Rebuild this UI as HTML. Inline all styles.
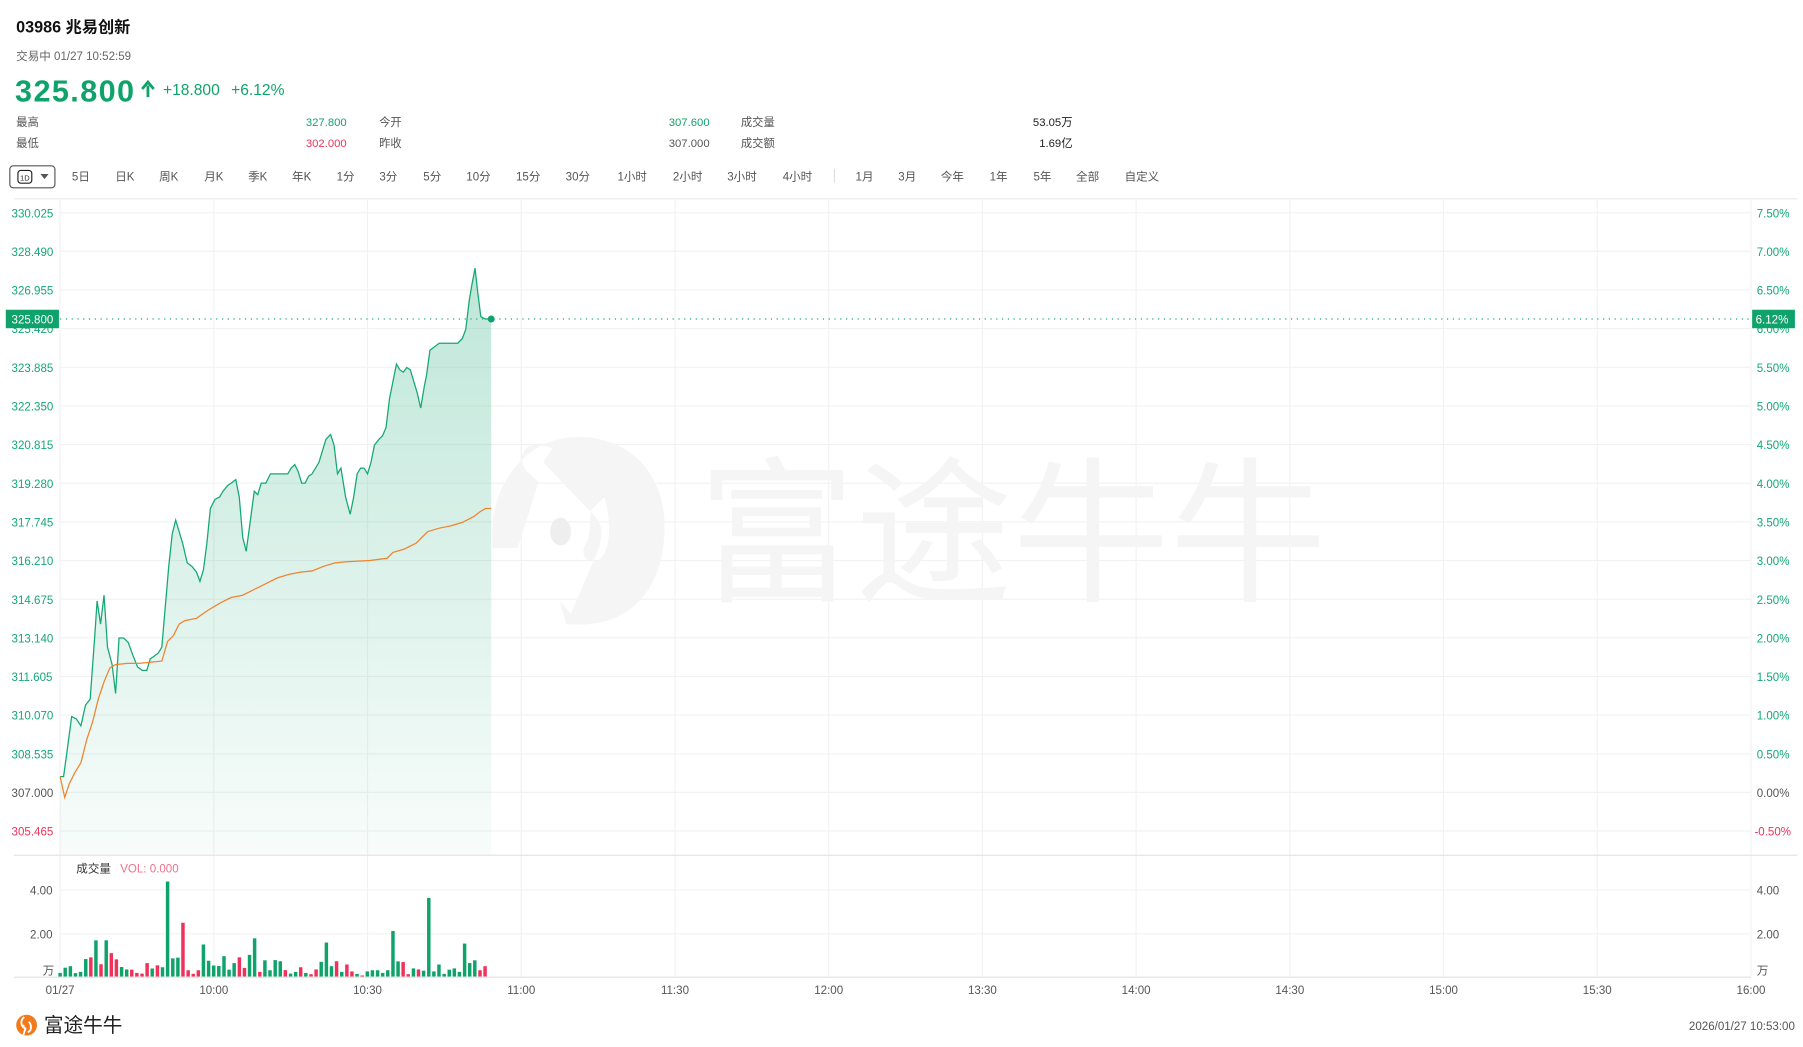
<!DOCTYPE html>
<html><head><meta charset="utf-8"><style>
html,body{margin:0;padding:0;background:#fff;width:1803px;height:1047px;overflow:hidden}
svg{display:block}
text{font-family:"Liberation Sans","Noto Sans CJK SC",sans-serif}
</style></head><body>
<svg width="1803" height="1047" viewBox="0 0 1560 905.9" xmlns="http://www.w3.org/2000/svg">
<defs>
<linearGradient id="ag" x1="0" y1="0" x2="0" y2="1">
<stop offset="0" stop-color="#18a874" stop-opacity="0.28"/>
<stop offset="1" stop-color="#18a874" stop-opacity="0.03"/>
</linearGradient>
</defs>
<text x="14" y="28" font-size="14" font-weight="bold" fill="#111">03986  兆易创新</text>
<text x="14" y="52" font-size="10" fill="#666">交易中 01/27 10:52:59</text>
<text x="13" y="88" font-size="26.5" font-weight="bold" fill="#0fa36b" textLength="103">325.800</text>
<path d="M128 84 V74 M123 77 L128 71 L133 77" stroke="#0fa36b" stroke-width="2.4" fill="none"/>
<text x="141" y="82" font-size="13.5" fill="#0fa36b">+18.800</text>
<text x="200" y="82" font-size="13.5" fill="#0fa36b">+6.12%</text>
<g font-size="9.8" fill="#555">
<text x="14" y="109">最高</text><text x="14" y="127">最低</text>
<text x="328" y="109">今开</text><text x="328" y="127">昨收</text>
<text x="641" y="109">成交量</text><text x="641" y="127">成交额</text>
</g>
<g font-size="9.8" text-anchor="end">
<text x="300" y="109" fill="#0fa36b">327.800</text>
<text x="300" y="127" fill="#f0325a">302.000</text>
<text x="614" y="109" fill="#0fa36b">307.600</text>
<text x="614" y="127" fill="#555">307.000</text>
<text x="928" y="109" fill="#222">53.05万</text>
<text x="928" y="127" fill="#222">1.69亿</text>
</g>
<rect x="8.5" y="143.5" width="39" height="19" rx="3" fill="#fff" stroke="#555"/>
<rect x="15.5" y="147.5" width="12" height="11" rx="2.5" fill="none" stroke="#222"/>
<text x="21.5" y="156" font-size="6.5" text-anchor="middle" fill="#222">1D</text>
<path d="M35 150.5 L42 150.5 L38.5 155 Z" fill="#555"/>
<g font-size="10" fill="#555" text-anchor="middle">
<text x="70" y="156">5日</text><text x="108" y="156">日K</text><text x="146" y="156">周K</text><text x="185" y="156">月K</text><text x="223" y="156">季K</text><text x="261" y="156">年K</text><text x="299" y="156">1分</text><text x="336" y="156">3分</text><text x="374" y="156">5分</text><text x="414" y="156">10分</text><text x="457" y="156">15分</text><text x="500" y="156">30分</text><text x="547" y="156">1小时</text><text x="595" y="156">2小时</text><text x="642" y="156">3小时</text><text x="690" y="156">4小时</text><text x="748" y="156">1月</text><text x="785" y="156">3月</text><text x="824" y="156">今年</text><text x="864" y="156">1年</text><text x="902" y="156">5年</text><text x="941" y="156">全部</text><text x="988" y="156">自定义</text>
</g>
<line x1="722" y1="146" x2="722" y2="158" stroke="#ddd"/>
<line x1="12" y1="172" x2="1555" y2="172" stroke="#e8e8e8"/>
<g stroke="#f2f2f2" stroke-width="1">
<path d="M52 184H1515M52 217.4H1515M52 250.9H1515M52 284.3H1515M52 317.8H1515M52 351.2H1515M52 384.6H1515M52 418.1H1515M52 451.5H1515M52 485H1515M52 518.4H1515M52 551.8H1515M52 585.3H1515M52 618.7H1515M52 652.2H1515M52 685.6H1515M52 719H1515"/>
<path d="M52 172V845M185 172V845M318 172V845M451 172V845M584 172V845M717 172V845M850 172V845M983 172V845M1116 172V845M1249 172V845M1382 172V845M1515 172V845"/>
<path d="M52 770H1515M52 808H1515"/>
</g>
<g fill="#f5f5f5">
<path d="M500 378 C455 378 426 420 426 458 L426 474 L448 474 L466 417 L456 408 C447 398 451 377 478 388 L470 400 L515 447 C522 455 521 465 518 475 L494 531 L484 520 L490 540 C545 545 575 510 575 455 C575 410 545 378 500 378 Z M523 430 C530 455 528 484 514 486 C506 486 502 478 507 470 C512 460 510 450 511 442 Z"/>
<ellipse cx="485" cy="460" rx="9" ry="12" fill="#eeeeee"/>
<text x="604" y="510" font-size="136" fill="#f5f5f5">富途牛牛</text>
</g>
<path fill="url(#ag)" d="M52 672 L55 672 58 650 62 620 66 622 70 628 74 610 78 605 82 550 84 520 87 540 90 515 93 560 97 575 100 600 103 552 107 552 111 556 115 567 119 577 123 580 127 580 130 570 133 568 137 565 140 560 143 525 146 490 149 462 152 450 155 460 158 470 162 487 166 490 170 495 173 503 176 493 179 470 182 440 186 432 190 430 193 425 197 420 200 418 204 415 207 430 210 465 213 477 216 455 220 425 223 428 226 418 230 418 234 410 237 410 241 410 245 410 249 410 252 405 255 402 258 408 261 418 264 418 267 412 270 410 273 405 276 400 279 390 282 380 286 376 289 385 292 410 295 405 299 430 303 445 306 430 309 410 312 405 315 405 318 410 321 400 324 385 328 380 331 377 334 370 337 345 340 330 343 315 346 320 349 322 352 318 355 320 358 330 361 340 364 353 367 335 369 325 372 303 376 300 380 297 384 297 388 297 392 297 396 297 400 293 403 285 406 260 408 248 411 232 413 250 416 274 420 276 425 276 L425 740 L52 740 Z"/>
<polyline fill="none" stroke="#14a874" stroke-width="1.1" points="52,672 55,672 58,650 62,620 66,622 70,628 74,610 78,605 82,550 84,520 87,540 90,515 93,560 97,575 100,600 103,552 107,552 111,556 115,567 119,577 123,580 127,580 130,570 133,568 137,565 140,560 143,525 146,490 149,462 152,450 155,460 158,470 162,487 166,490 170,495 173,503 176,493 179,470 182,440 186,432 190,430 193,425 197,420 200,418 204,415 207,430 210,465 213,477 216,455 220,425 223,428 226,418 230,418 234,410 237,410 241,410 245,410 249,410 252,405 255,402 258,408 261,418 264,418 267,412 270,410 273,405 276,400 279,390 282,380 286,376 289,385 292,410 295,405 299,430 303,445 306,430 309,410 312,405 315,405 318,410 321,400 324,385 328,380 331,377 334,370 337,345 340,330 343,315 346,320 349,322 352,318 355,320 358,330 361,340 364,353 367,335 369,325 372,303 376,300 380,297 384,297 388,297 392,297 396,297 400,293 403,285 406,260 408,248 411,232 413,250 416,274 420,276 425,276"/>
<polyline fill="none" stroke="#f08430" stroke-width="1.1" points="52,672 56,690 60,678 65,668 70,660 75,640 80,625 85,605 90,590 95,578 100,575 110,574 120,574 130,573 140,572 145,555 150,550 155,540 160,537 170,535 180,528 190,522 200,517 210,515 220,510 230,505 240,500 250,497 260,495 270,494 280,490 290,487 300,486 320,485 335,483 340,478 350,475 360,470 370,460 380,457 390,455 400,452 410,447 415,443 420,440 425,440"/>
<line x1="52" y1="276" x2="1515" y2="276" stroke="#14a874" stroke-width="1" stroke-dasharray="1 4"/>
<circle cx="425" cy="276" r="3" fill="#0fa36b"/>
<g font-size="10" fill="#14a874">
<text x="10" y="188">330.025</text><text x="10" y="221.4">328.490</text><text x="10" y="254.9">326.955</text><text x="10" y="288.3">325.420</text><text x="10" y="321.8">323.885</text><text x="10" y="355.2">322.350</text><text x="10" y="388.6">320.815</text><text x="10" y="422.1">319.280</text><text x="10" y="455.5">317.745</text><text x="10" y="489">316.210</text><text x="10" y="522.4">314.675</text><text x="10" y="555.8">313.140</text><text x="10" y="589.3">311.605</text><text x="10" y="622.7">310.070</text><text x="10" y="656.2">308.535</text>
<text x="10" y="689.6" fill="#555">307.000</text><text x="10" y="723" fill="#f0325a">305.465</text>
<text x="1520" y="188">7.50%</text><text x="1520" y="221.4">7.00%</text><text x="1520" y="254.9">6.50%</text><text x="1520" y="288.3">6.00%</text><text x="1520" y="321.8">5.50%</text><text x="1520" y="355.2">5.00%</text><text x="1520" y="388.6">4.50%</text><text x="1520" y="422.1">4.00%</text><text x="1520" y="455.5">3.50%</text><text x="1520" y="489">3.00%</text><text x="1520" y="522.4">2.50%</text><text x="1520" y="555.8">2.00%</text><text x="1520" y="589.3">1.50%</text><text x="1520" y="622.7">1.00%</text><text x="1520" y="656.2">0.50%</text>
<text x="1520" y="689.6" fill="#555">0.00%</text><text x="1518" y="723" fill="#f0325a">-0.50%</text>
</g>
<rect x="5" y="268" width="46" height="16" fill="#0fa36b"/>
<text x="10" y="280" font-size="10" fill="#fff">325.800</text>
<rect x="1516" y="268" width="37" height="16" fill="#0fa36b"/>
<text x="1519" y="280" font-size="10" fill="#fff">6.12%</text>
<line x1="12" y1="740" x2="1555" y2="740" stroke="#e4e4e4"/>
<text x="66" y="755" font-size="10" fill="#333">成交量</text>
<text x="104" y="755" font-size="10" fill="#f0708a">VOL: 0.000</text>
<g font-size="10" fill="#555">
<text x="26" y="774">4.00</text><text x="26" y="812">2.00</text><text x="37" y="843">万</text>
<text x="1520" y="774">4.00</text><text x="1520" y="812">2.00</text><text x="1520" y="843">万</text>
</g>
<g fill="#0fa36b">
<rect x="50.5" y="841.8" width="3" height="3.2"/><rect x="54.9" y="837.3" width="3" height="7.7"/><rect x="59.4" y="836" width="3" height="9"/><rect x="63.8" y="842" width="3" height="3"/><rect x="68.2" y="840.9" width="3" height="4.1"/><rect x="72.7" y="829.8" width="3" height="15.2"/><rect x="81.5" y="813.6" width="3" height="31.4"/><rect x="90.4" y="813.6" width="3" height="31.4"/><rect x="103.7" y="836.7" width="3" height="8.3"/><rect x="108.1" y="838.8" width="3" height="6.2"/><rect x="130.2" y="838" width="3" height="7"/><rect x="139.1" y="836.9" width="3" height="8.1"/><rect x="143.5" y="762.7" width="3" height="82.3"/><rect x="148" y="829.2" width="3" height="15.8"/><rect x="152.4" y="828.6" width="3" height="16.4"/><rect x="174.5" y="817.2" width="3" height="27.8"/><rect x="179" y="831.3" width="3" height="13.7"/><rect x="183.4" y="835.4" width="3" height="9.6"/><rect x="187.8" y="835.8" width="3" height="9.2"/><rect x="192.3" y="827.3" width="3" height="17.7"/><rect x="196.7" y="839" width="3" height="6"/><rect x="201.1" y="833.3" width="3" height="11.7"/><rect x="214.4" y="826.2" width="3" height="18.8"/><rect x="218.8" y="811.9" width="3" height="33.1"/><rect x="227.7" y="830.9" width="3" height="14.1"/><rect x="232.1" y="839.5" width="3" height="5.5"/><rect x="236.6" y="830.7" width="3" height="14.3"/><rect x="241" y="831.7" width="3" height="13.3"/><rect x="249.9" y="842.4" width="3" height="2.6"/><rect x="254.3" y="840.9" width="3" height="4.1"/><rect x="263.1" y="841.8" width="3" height="3.2"/><rect x="276.4" y="832.2" width="3" height="12.8"/><rect x="280.9" y="815.5" width="3" height="29.5"/><rect x="285.3" y="836" width="3" height="9"/><rect x="294.2" y="840.9" width="3" height="4.1"/><rect x="307.4" y="842.6" width="3" height="2.4"/><rect x="316.3" y="840.5" width="3" height="4.5"/><rect x="320.7" y="839.5" width="3" height="5.5"/><rect x="325.2" y="839.5" width="3" height="5.5"/><rect x="329.6" y="841.8" width="3" height="3.2"/><rect x="334" y="839.5" width="3" height="5.5"/><rect x="338.5" y="805.5" width="3" height="39.5"/><rect x="342.9" y="831.8" width="3" height="13.2"/><rect x="356.2" y="837.9" width="3" height="7.1"/><rect x="365" y="839.9" width="3" height="5.1"/><rect x="369.5" y="776.9" width="3" height="68.1"/><rect x="373.9" y="840.5" width="3" height="4.5"/><rect x="378.3" y="834.5" width="3" height="10.5"/><rect x="382.8" y="842.6" width="3" height="2.4"/><rect x="387.2" y="839" width="3" height="6"/><rect x="391.6" y="837.9" width="3" height="7.1"/><rect x="396" y="840.9" width="3" height="4.1"/><rect x="400.5" y="816.4" width="3" height="28.6"/><rect x="404.9" y="833.3" width="3" height="11.7"/><rect x="409.3" y="830.9" width="3" height="14.1"/>
</g>
<g fill="#f0325a">
<rect x="77.1" y="828.3" width="3" height="16.7"/><rect x="85.9" y="834.3" width="3" height="10.7"/><rect x="94.8" y="824.7" width="3" height="20.3"/><rect x="99.2" y="830.1" width="3" height="14.9"/><rect x="112.5" y="839" width="3" height="6"/><rect x="116.9" y="841.8" width="3" height="3.2"/><rect x="121.4" y="842.4" width="3" height="2.6"/><rect x="125.8" y="833.3" width="3" height="11.7"/><rect x="134.7" y="835.2" width="3" height="9.8"/><rect x="156.8" y="798.4" width="3" height="46.6"/><rect x="161.3" y="839.5" width="3" height="5.5"/><rect x="165.7" y="842.6" width="3" height="2.4"/><rect x="170.1" y="839.5" width="3" height="5.5"/><rect x="205.6" y="828.3" width="3" height="16.7"/><rect x="210" y="837.5" width="3" height="7.5"/><rect x="223.3" y="840.9" width="3" height="4.1"/><rect x="245.4" y="839.4" width="3" height="5.6"/><rect x="258.7" y="836.9" width="3" height="8.1"/><rect x="267.6" y="842.9" width="3" height="2.1"/><rect x="272" y="838.8" width="3" height="6.2"/><rect x="289.7" y="831.7" width="3" height="13.3"/><rect x="298.6" y="834.5" width="3" height="10.5"/><rect x="303" y="840.5" width="3" height="4.5"/><rect x="311.9" y="844" width="3" height="1"/><rect x="347.3" y="832.4" width="3" height="12.6"/><rect x="351.7" y="842.9" width="3" height="2.1"/><rect x="360.6" y="838.8" width="3" height="6.2"/><rect x="413.8" y="839.5" width="3" height="5.5"/><rect x="418.2" y="836" width="3" height="9"/>
</g>
<line x1="12" y1="845.5" x2="1515" y2="845.5" stroke="#e0e0e0"/>
<g font-size="10" fill="#555" text-anchor="middle">
<text x="52" y="860">01/27</text><text x="185" y="860">10:00</text><text x="318" y="860">10:30</text><text x="451" y="860">11:00</text><text x="584" y="860">11:30</text><text x="717" y="860">12:00</text><text x="850" y="860">13:30</text><text x="983" y="860">14:00</text><text x="1116" y="860">14:30</text><text x="1249" y="860">15:00</text><text x="1382" y="860">15:30</text><text x="1515" y="860">16:00</text>
</g>
<circle cx="23" cy="887" r="9" fill="#f27a1a"/>
<path d="M21 880 C17 883 18 888 22 890 L20 896 M25 884 C28 888 27 892 24 893" stroke="#fff" stroke-width="1.6" fill="none"/>
<circle cx="20" cy="888" r="1.3" fill="#fff"/>
<text x="38" y="893" font-size="17" fill="#222">富途牛牛</text>
<text x="1553" y="891" font-size="10" fill="#555" text-anchor="end">2026/01/27 10:53:00</text>
</svg>
</body></html>
